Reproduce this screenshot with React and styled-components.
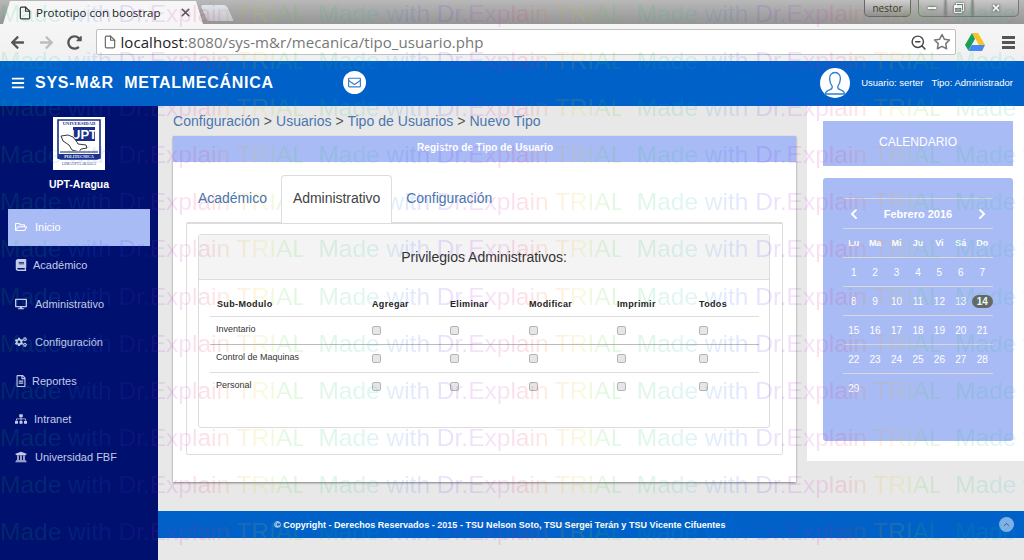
import React from 'react';
import styled, { createGlobalStyle } from 'styled-components';
import {
  FaRegFolderOpen, FaBook, FaDesktop, FaCogs, FaRegFileAlt, FaSitemap, FaUniversity,
  FaBars, FaRegEnvelope, FaChevronLeft, FaChevronRight, FaArrowLeft, FaArrowRight, FaRedoAlt,
  FaMinus, FaRegWindowRestore, FaTimes,
} from 'react-icons/fa';
import { FiFile, FiX, FiStar, FiZoomOut, FiChevronUp } from 'react-icons/fi';

const menu = [
  { icon: <FaRegFolderOpen />, label: 'Inicio', active: true },
  { icon: <FaBook />, label: 'Académico', gap: 8 },
  { icon: <FaDesktop />, label: 'Administrativo' },
  { icon: <FaCogs />, label: 'Configuración' },
  { icon: <FaRegFileAlt />, label: 'Reportes', gap: 7 },
  { icon: <FaSitemap />, label: 'Intranet', gap: 9 },
  { icon: <FaUniversity />, label: 'Universidad FBF' },
];

const rows = ['Inventario', 'Control de Maquinas', 'Personal'];
const columns = ['Agregar', 'Eliminar', 'Modificar', 'Imprimir', 'Todos'];
const weeks = [
  [1, 2, 3, 4, 5, 6, 7],
  [8, 9, 10, 11, 12, 13, 14],
  [15, 16, 17, 18, 19, 20, 21],
  [22, 23, 24, 25, 26, 27, 28],
  [29],
];

const App = () => (
  <Page>
    <GlobalStyle />
    <Chrome>
      <TabStrip>
        <ActiveTab>
          <FiFile size={14} />
          <TabTitle>Prototipo con boostrap</TabTitle>
          <FiX size={13} strokeWidth={3} color="#555" />
        </ActiveTab>
        <NewTab />
        <WindowArea>
          <UserBadge>nestor</UserBadge>
          <WindowButtons>
            <WindowButton><FaMinus /></WindowButton>
            <WindowButton><FaRegWindowRestore /></WindowButton>
            <WindowButton $wide><FaTimes /></WindowButton>
          </WindowButtons>
        </WindowArea>
      </TabStrip>
      <Toolbar>
        <NavIcon><FaArrowLeft /></NavIcon>
        <NavIcon $disabled><FaArrowRight /></NavIcon>
        <NavIcon><FaRedoAlt /></NavIcon>
        <Omnibox>
          <FiFile size={14} color="#666" />
          <Url><b>localhost</b>:8080/sys-m&amp;r/mecanica/tipo_usuario.php</Url>
          <FiZoomOut size={17} color="#444" />
          <FiStar size={18} color="#777" />
        </Omnibox>
        <DriveLogo viewBox="0 0 20 18">
          <path d="M7 0h6l7 12h-6z" fill="#f7c325" />
          <path d="M7 0l3 6-6.6 11.6L0 12z" fill="#1a9e58" />
          <path d="M6.6 12H20l-3 6H3.4z" fill="#4687f4" />
        </DriveLogo>
        <ChromeMenu><span /><span /><span /></ChromeMenu>
      </Toolbar>
    </Chrome>

    <Header>
      <FaBars size={14} />
      <Brand>SYS-M&amp;R&nbsp;&nbsp;METALMECÁNICA</Brand>
      <MailButton><FaRegEnvelope /></MailButton>
      <UserArea>
        <Avatar>
          <svg width="22" height="24" viewBox="0 0 22 24" fill="none" stroke="#2f7fd0" strokeWidth="1.3">
            <path d="M11 1.5c-3.6 0-5.6 2.8-5.4 6.4.2 3.5 1.5 6 2.6 7.4.3 1.6-.4 2.7-2.2 3.3-2.4.8-4.5 1.6-4.7 4.4h19.4c-.2-2.8-2.3-3.6-4.7-4.4-1.8-.6-2.5-1.7-2.2-3.3 1.1-1.4 2.4-3.9 2.6-7.4.2-3.6-1.8-6.4-5.4-6.4z" />
          </svg>
        </Avatar>
        <UserText>Usuario: serter</UserText>
        <UserText>Tipo: Administrador</UserText>
      </UserArea>
    </Header>

    <Body>
      <Sidebar>
        <LogoBox>
          <svg width="44" height="50" viewBox="0 0 44 50">
            <path d="M1 1h42v38l-3 1H4l-3-1z" fill="#fff" stroke="#1a2f8c" strokeWidth="1.6" />
            <text x="22" y="6" fontSize="4.6" fontWeight="700" fill="#1a2f8c" textAnchor="middle" fontFamily="Liberation Serif, serif">UNIVERSIDAD</text>
            <rect x="16" y="8" width="22" height="14" fill="#1a2f8c" />
            <text x="27" y="20" fontSize="13" fontWeight="700" fill="#fff" textAnchor="middle" fontFamily="Liberation Sans, sans-serif">UPT</text>
            <path d="M4 17l7-1 5 2 4 5 1 2 8 1 1 3-6 1-2 3-7-2-3-5-6-4z" fill="#fff" stroke="#222" strokeWidth="0.9" />
            <rect x="3" y="32" width="38" height="2" fill="#8a8fa8" />
            <rect x="1" y="35" width="42" height="5" fill="#1a2f8c" />
            <text x="22" y="39.2" fontSize="4.2" fontWeight="700" fill="#fff" textAnchor="middle" fontFamily="Liberation Serif, serif">POLITECNICA</text>
            <text x="22" y="46" fontSize="3.4" fill="#1a2f8c" textAnchor="middle" fontFamily="Liberation Serif, serif">LEMA UPTA  ARAGUA</text>
          </svg>
        </LogoBox>
        <SchoolName>UPT-Aragua</SchoolName>
        <Menu>
          {menu.map(item => (
            <MenuItem key={item.label} $active={item.active}>
              <MenuIcon $gap={item.gap}>{item.icon}</MenuIcon>
              {item.label}
            </MenuItem>
          ))}
        </Menu>
      </Sidebar>

      <MainColumn>
        <Columns>
          <Content>
            <Breadcrumb>Configuración <i>&gt;</i> Usuarios <i>&gt;</i> Tipo de Usuarios <i>&gt;</i> Nuevo Tipo</Breadcrumb>
            <Card>
              <CardTitle>Registro de Tipo de Usuario</CardTitle>
              <CardBody>
                <Tabs>
                  <TabLink>Académico</TabLink>
                  <TabLink $active>Administrativo</TabLink>
                  <TabLink>Configuración</TabLink>
                </Tabs>
                <TabPane>
                  <Panel>
                    <PanelHeading>Privilegios Administrativos:</PanelHeading>
                    <Table>
                      <thead>
                        <tr>
                          <HeadCell>Sub-Modulo</HeadCell>
                          {columns.map(c => <HeadCell key={c}>{c}</HeadCell>)}
                        </tr>
                      </thead>
                      <tbody>
                        {rows.map(row => (
                          <tr key={row}>
                            <RowLabel>{row}</RowLabel>
                            {columns.map(c => (
                              <CheckCell key={c}><Check /></CheckCell>
                            ))}
                          </tr>
                        ))}
                      </tbody>
                    </Table>
                  </Panel>
                </TabPane>
              </CardBody>
            </Card>
          </Content>

          <Aside>
            <CalendarTitle>CALENDARIO</CalendarTitle>
            <CalendarBox>
              <Calendar>
                <thead>
                  <tr>
                    <MonthCell><FaChevronLeft /></MonthCell>
                    <MonthCell colSpan={5}>Febrero 2016</MonthCell>
                    <MonthCell><FaChevronRight /></MonthCell>
                  </tr>
                  <tr>
                    {['Lu', 'Ma', 'Mi', 'Ju', 'Vi', 'Sá', 'Do'].map(d => <DayName key={d}>{d}</DayName>)}
                  </tr>
                </thead>
                <tbody>
                  {weeks.map(week => (
                    <tr key={week[0]}>
                      {week.map(d => (
                        <DayCell key={d}>{d === 14 ? <Today>14</Today> : d}</DayCell>
                      ))}
                    </tr>
                  ))}
                </tbody>
              </Calendar>
            </CalendarBox>
          </Aside>
        </Columns>
        <Footer>
          <span>© Copyright - Derechos Reservados - 2015 - TSU Nelson Soto, TSU Sergei Terán y TSU Vicente Cifuentes</span>
          <ScrollTop><FiChevronUp /></ScrollTop>
        </Footer>
      </MainColumn>
    </Body>

    <Watermark aria-hidden="true">
      {Array.from({ length: 12 }).map((_, r) => (
        <WatermarkRow key={r}>
          {Array.from({ length: 4 }).map((_, c) => <WatermarkText key={c}>Made with Dr.Explain TRIAL</WatermarkText>)}
        </WatermarkRow>
      ))}
    </Watermark>
  </Page>
);

export default App;

const GlobalStyle = createGlobalStyle`
  html, body {
    margin: 0;
    padding: 0;
    background: #e8e8e8;
  }
  * {
    box-sizing: border-box;
  }
`;

const Page = styled.div`
  position: relative;
  width: 1024px;
  height: 560px;
  overflow: hidden;
  display: flex;
  flex-direction: column;
  background: #e8e8e8;
  font-family: "Liberation Sans", Arial, sans-serif;
`;

const Chrome = styled.div`
  height: 61px;
  flex: none;
  display: flex;
  flex-direction: column;
`;

const TabStrip = styled.div`
  height: 24px;
  flex: none;
  display: flex;
  align-items: flex-end;
  padding-left: 3px;
  background: linear-gradient(#b8b8b8, #959595);
`;

const ActiveTab = styled.div`
  width: 200px;
  height: 23px;
  display: flex;
  align-items: center;
  gap: 4px;
  padding: 0 11px 0 15px;
  background: #f6f6f6;
  clip-path: polygon(0 100%, 7px 0, calc(100% - 7px) 0, 100% 100%);
  color: #333;
`;

const TabTitle = styled.span`
  flex: 1;
  font-family: "Open Sans", sans-serif;
  font-size: 11.5px;
  color: #222;
  white-space: nowrap;
`;

const NewTab = styled.div`
  width: 26px;
  height: 16px;
  margin: 0 0 3px 1px;
  background: linear-gradient(#dfe3ea, #bfc4cc);
  border-radius: 3px 3px 0 0;
  transform: skewX(25deg);
`;

const WindowArea = styled.div`
  margin-left: auto;
  align-self: flex-start;
  display: flex;
  align-items: flex-start;
  gap: 7px;
  padding-right: 5px;
`;

const UserBadge = styled.div`
  width: 47px;
  height: 17px;
  font-family: "Open Sans", sans-serif;
  font-size: 10px;
  line-height: 16px;
  text-align: center;
  color: #333;
  background: linear-gradient(#d0d0d0, #8f8f8f);
  border: 1px solid #666;
  border-top: 0;
  border-radius: 0 0 5px 5px;
`;

const WindowButtons = styled.div`
  display: flex;
  height: 17px;
  border: 1px solid #777;
  border-top: 0;
  border-radius: 0 0 5px 5px;
  background: linear-gradient(#c8c8c8, #9c9c9c);
`;

const WindowButton = styled.div`
  width: ${p => (p.$wide ? 45 : 27)}px;
  display: flex;
  align-items: center;
  justify-content: center;
  font-size: 10px;
  color: #f8f8f8;
  border-right: 1px solid #888;
  filter: drop-shadow(0 0 1px #333);

  &:last-child {
    border-right: 0;
  }
`;

const Toolbar = styled.div`
  height: 37px;
  flex: none;
  display: flex;
  align-items: center;
  padding: 0 9px 1px 10px;
  background: linear-gradient(#f6f6f6, #f0f0f0);
`;

const NavIcon = styled.div`
  width: 28.5px;
  flex: none;
  display: flex;
  font-size: 15px;
  color: ${p => (p.$disabled ? '#bdbdbd' : '#555')};
`;

const Omnibox = styled.div`
  flex: 1;
  height: 26px;
  margin: 0 9px 0 0;
  display: flex;
  align-items: center;
  gap: 6px;
  padding: 0 4px 0 6px;
  background: #fff;
  border: 1px solid #c0c0c0;
  border-radius: 2px;
`;

const Url = styled.div`
  flex: 1;
  margin-left: -2px;
  font-family: "Open Sans", sans-serif;
  font-size: 15px;
  letter-spacing: 0.07px;
  color: #777;

  b {
    font-weight: normal;
    color: #222;
  }
`;

const DriveLogo = styled.svg`
  width: 20px;
  height: 18px;
  flex: none;
  margin-right: 17px;
`;

const ChromeMenu = styled.div`
  width: 13px;
  display: flex;
  flex-direction: column;
  gap: 2px;

  span {
    height: 3px;
    background: #555;
  }
`;

const Header = styled.header`
  height: 45px;
  flex: none;
  display: flex;
  align-items: center;
  padding: 0 11px 2px;
  background: #0061c9;
  color: #fff;
`;

const Brand = styled.div`
  margin-left: 10px;
  font-size: 16px;
  font-weight: bold;
  letter-spacing: 0.73px;
  white-space: nowrap;
`;

const MailButton = styled.div`
  width: 23px;
  height: 23px;
  margin-left: 69px;
  display: flex;
  align-items: center;
  justify-content: center;
  border-radius: 50%;
  background: #fff;
  color: #3b7fc9;
  font-size: 13px;
`;

const UserArea = styled.div`
  margin-left: auto;
  display: flex;
  align-items: center;
  gap: 8px;
`;

const Avatar = styled.div`
  width: 30px;
  height: 30px;
  margin-right: 3px;
  display: flex;
  align-items: center;
  justify-content: center;
  border-radius: 50%;
  background: #fff;
`;

const UserText = styled.span`
  font-size: 9.5px;
  white-space: nowrap;
`;

const Body = styled.div`
  flex: 1;
  min-height: 0;
  display: flex;
`;

const Sidebar = styled.aside`
  width: 158px;
  flex: none;
  padding: 11px 8px 0;
  background: #00106e;
`;

const LogoBox = styled.div`
  width: 52px;
  height: 53px;
  margin: 0 auto;
  display: flex;
  align-items: center;
  justify-content: center;
  background: #fff;
`;

const SchoolName = styled.div`
  margin-top: 8px;
  font-size: 10.5px;
  font-weight: bold;
  line-height: 12px;
  text-align: center;
  color: #fff;
`;

const Menu = styled.nav`
  margin-top: 19px;
  display: flex;
  flex-direction: column;
  gap: 1.4px;
`;

const MenuItem = styled.div`
  height: 37px;
  display: flex;
  align-items: center;
  padding-left: 7px;
  padding-bottom: 1px;
  font-size: 11px;
  color: ${p => (p.$active ? '#fff' : '#c4cbe6')};
  background: ${p => (p.$active ? '#a9bbf5' : 'transparent')};
`;

const MenuIcon = styled.span`
  width: ${p => (p.$gap ? 10 + p.$gap : 20)}px;
  flex: none;
  display: flex;
  font-size: 12px;
`;

const MainColumn = styled.div`
  flex: 1;
  min-width: 0;
  display: flex;
  flex-direction: column;
`;

const Columns = styled.div`
  height: 405px;
  flex: none;
  display: flex;
  align-items: flex-start;
`;

const Content = styled.main`
  width: 649px;
  flex: none;
  padding: 7px 0 0 15px;
`;

const Breadcrumb = styled.div`
  height: 23px;
  font-size: 14px;
  line-height: 16px;
  letter-spacing: 0.04px;
  color: #4a76ad;

  i {
    font-style: normal;
    color: #555;
  }
`;

const Card = styled.section`
  width: 623px;
  height: 346px;
  background: #fff;
  box-shadow: 0 1px 2px rgba(0, 0, 0, 0.45);
`;

const CardTitle = styled.div`
  height: 26px;
  padding: 6px 0 0 244px;
  font-size: 10px;
  font-weight: bold;
  letter-spacing: 0.11px;
  line-height: 12px;
  color: #fff;
  background: #a9bbf5;
`;

const CardBody = styled.div`
  padding: 13px 13px 0;
`;

const Tabs = styled.div`
  height: 47px;
  display: flex;
`;

const TabLink = styled.div`
  height: 48px;
  margin-right: 2px;
  display: flex;
  align-items: center;
  padding: 0 11px 4px;
  font-size: 14px;
  letter-spacing: -0.04px;
  white-space: nowrap;
  color: ${p => (p.$active ? '#444' : '#4a76ad')};
  background: ${p => (p.$active ? '#fff' : 'transparent')};
  border: 1px solid ${p => (p.$active ? '#ddd' : 'transparent')};
  border-bottom: 0;
  border-radius: 4px 4px 0 0;
  position: relative;
  z-index: 1;
`;

const TabPane = styled.div`
  height: 233px;
  padding: 10px 12px 0 11px;
  border: 1px solid #ddd;
  border-top-width: 2px;
  border-radius: 2px;
`;

const Panel = styled.div`
  height: 194px;
  border: 1px solid #ddd;
  border-radius: 3px;
`;

const PanelHeading = styled.div`
  height: 45px;
  font-size: 14px;
  line-height: 44px;
  text-align: center;
  color: #333;
  background: #f4f4f4;
  border-bottom: 1px solid #ddd;
`;

const Table = styled.table`
  width: 549px;
  margin: 0 0 0 11px;
  border-collapse: collapse;
  table-layout: fixed;
`;

const HeadCell = styled.th`
  height: 36px;
  padding: 12px 0 0 7px;
  font-size: 9px;
  letter-spacing: 0.35px;
  text-align: left;
  vertical-align: middle;
  color: #222;
  border-bottom: 1px solid #ddd;

  &:nth-child(1) { width: 155px; }
  &:nth-child(2) { width: 78px; }
  &:nth-child(3) { width: 79px; }
  &:nth-child(4) { width: 88px; }
  &:nth-child(5) { width: 82px; }
`;

const RowLabel = styled.td`
  height: 28px;
  padding: 0 0 2px 6px;
  font-size: 9px;
  color: #333;
  border-bottom: 1px solid #ddd;

  tr:first-child & {
    border-bottom-color: #bbb;
  }
  tr:last-child & {
    border-bottom: 0;
  }
`;

const CheckCell = styled.td`
  height: 28px;
  padding: 0 0 0 7px;
  border-bottom: 1px solid #ddd;

  tr:first-child & {
    border-bottom-color: #bbb;
  }
  tr:last-child & {
    border-bottom: 0;
  }
`;

const Check = styled.span`
  display: block;
  width: 9px;
  height: 9px;
  background: #e6e6e6;
  border: 1px solid #b4b4b4;
  border-radius: 2px;
`;

const Aside = styled.aside`
  width: 217px;
  height: 355px;
  padding: 15px 11px 0 16px;
  background: #fff;
`;

const CalendarTitle = styled.div`
  height: 45px;
  font-size: 12px;
  line-height: 43px;
  text-align: center;
  color: #fff;
  background: #a9bbf5;
`;

const CalendarBox = styled.div`
  height: 263px;
  margin-top: 12px;
  padding: 20px 20px 0;
  background: #a9bbf5;
  border-radius: 3px;
`;

const Calendar = styled.table`
  width: 150px;
  border-collapse: collapse;
  table-layout: fixed;
  color: #fff;
  font-size: 10px;
  text-align: center;
`;

const MonthCell = styled.th`
  height: 30px;
  padding: 0;
  font-size: 11px;
  font-weight: bold;
  border-top: 1px solid #d8d8d8;
  border-bottom: 1px solid #d8d8d8;
  text-align: center;

  svg {
    display: block;
    margin: 0 auto;
    font-size: 12px;
  }
`;

const DayName = styled.th`
  height: 29px;
  padding: 0;
  font-size: 9px;
  font-weight: bold;
  border-bottom: 1px solid #d8d8d8;
`;

const DayCell = styled.td`
  height: 29px;
  padding: 0;
  border-bottom: 1px solid #d8d8d8;

  tr:last-child & {
    border-bottom: 0;
  }
`;

const Today = styled.span`
  display: block;
  width: 21px;
  height: 13px;
  margin: 0 auto;
  font-weight: bold;
  line-height: 13px;
  background: #666;
  border-radius: 7px;
`;

const Footer = styled.footer`
  height: 27px;
  flex: none;
  display: flex;
  align-items: center;
  justify-content: space-between;
  padding: 0 10px 0 116px;
  font-size: 9px;
  font-weight: bold;
  letter-spacing: 0.03px;
  color: #fff;
  background: #0061c9;
`;

const ScrollTop = styled.div`
  width: 15px;
  height: 15px;
  display: flex;
  align-items: center;
  justify-content: center;
  border-radius: 50%;
  background: #7fb0e6;
  color: #24466f;
  font-size: 9px;
`;

const Watermark = styled.div`
  position: absolute;
  inset: 0;
  pointer-events: none;
  overflow: hidden;
`;

const WatermarkRow = styled.div`
  height: 47.1px;
  display: flex;
  white-space: nowrap;
`;

const WatermarkText = styled.span`
  width: 318.4px;
  flex: none;
  font-size: 24.5px;
  line-height: 27px;
  font-family: "Liberation Sans", Arial, sans-serif;
  opacity: 0.13;
  background: linear-gradient(90deg, #10c050 0%, #10c0a0 15%, #2070f0 28%, #6020f0 42%, #d020d0 58%, #f01050 68%, #f09010 78%, #d8d810 87%, #30d030 95%);
  background-size: 303px 100%;
  background-repeat: no-repeat;
  -webkit-background-clip: text;
  background-clip: text;
  color: transparent;
`;
